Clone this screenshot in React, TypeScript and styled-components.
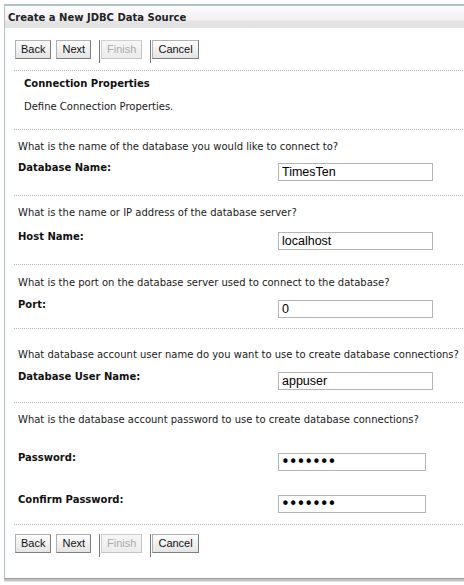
import React from "react";
import styled, { createGlobalStyle } from "styled-components";

const GlobalStyle = createGlobalStyle`
  html, body { margin: 0; padding: 0; background: #ffffff; }
  body {
    font-family: "DejaVu Sans", Verdana, sans-serif;
    font-size: 10px;
    color: #1a1a1a;
    overflow: hidden;
  }
`;

const Page = styled.div`
  width: 464px;
  height: 585px;
  padding: 4px 0 0 4px;
  box-sizing: border-box;
  overflow: hidden;
`;

const Frame = styled.div`
  width: 480px;
  border-top: 2px solid #b3c0c8;
  border-left: 1px solid #b3c0c8;
  border-bottom: 1px solid #9c9c9c;
  box-shadow: 0 2px 0 #c4c4c4, 0 3px 0 #e2e2e2;
`;

const TitleBar = styled.div`
  height: 22px;
  box-sizing: border-box;
  padding-left: 3px;
  display: flex;
  align-items: center;
  background: linear-gradient(
    to bottom,
    #fdfdfd 0px,
    #f8f5f8 7px,
    #f3eff3 14px,
    #e4e4e4 15px,
    #e2e2e2 22px
  );
  font-weight: bold;
  font-size: 10px;
  color: #222;
`;

const Content = styled.div`
  margin-left: 9px;
`;

const ButtonBar = styled.div<{ $pt: number; $pb: number; $dotted?: boolean }>`
  display: flex;
  align-items: flex-start;
  padding: ${(p) => p.$pt}px 0 ${(p) => p.$pb}px 1px;
  border-top: ${(p) => (p.$dotted ? "1px dotted #b4b4b4" : "none")};
`;

const Button = styled.button<{ $gap?: number }>`
  height: 19px;
  margin: 0 0 0 ${(p) => p.$gap ?? 0}px;
  padding: 0 5px;
  box-sizing: border-box;
  font-family: "Liberation Sans", Arial, sans-serif;
  font-size: 11px;
  color: ${(p) => (p.disabled ? "#ababab" : "#111")};
  background: ${(p) =>
    p.disabled
      ? "linear-gradient(to bottom, #f6f6f6, #ececec)"
      : "linear-gradient(to bottom, #fdfdfd, #e4e4e4)"};
  border: 1px solid ${(p) => (p.disabled ? "#cfcfcf" : "#b2b2b2")};
  border-right-color: ${(p) => (p.disabled ? "#c4c4c4" : "#7d7d7d")};
  border-bottom-color: ${(p) => (p.disabled ? "#c4c4c4" : "#7d7d7d")};
  border-radius: 0;
  line-height: 17px;
  cursor: default;
`;

const Separator = styled.span`
  display: block;
  width: 1px;
  height: 23px;
  margin-left: 8px;
  background: #7a7a7a;
`;

const Intro = styled.div`
  border-top: 1px dotted #b4b4b4;
  padding: 6px 0 15px 10px;
`;

const Heading = styled.div`
  font-weight: bold;
  line-height: 14px;
  color: #111;
`;

const IntroText = styled.div`
  margin-top: 9px;
  line-height: 14px;
`;

const Section = styled.div<{ $pt: number; $pb: number }>`
  border-top: 1px dotted #b4b4b4;
  padding: ${(p) => p.$pt}px 0 ${(p) => p.$pb}px 4px;
`;

const Question = styled.div`
  line-height: 14px;
  white-space: nowrap;
`;

const FieldRow = styled.div<{ $mt: number }>`
  display: grid;
  grid-template-columns: 260px auto;
  align-items: start;
  margin-top: ${(p) => p.$mt}px;
`;

const Label = styled.label`
  font-weight: bold;
  line-height: 14px;
  color: #111;
`;

const TextInput = styled.input<{ $narrow?: boolean }>`
  display: block;
  margin-top: 2px;
  width: ${(p) => (p.$narrow ? 148 : 155)}px;
  height: 18px;
  box-sizing: border-box;
  padding: 0 ${(p) => (p.type === "password" ? 2 : 3)}px;
  border: 1px solid #b4b4b4;
  border-radius: 0;
  outline: none;
  background: #fff;
  color: #000;
  font-family: ${(p) =>
    p.type === "password"
      ? '"DejaVu Sans", sans-serif'
      : '"Liberation Sans", Arial, sans-serif'};
  font-size: ${(p) => (p.type === "password" ? 15 : 12.5)}px;
  letter-spacing: ${(p) => (p.type === "password" ? "-1.1px" : "normal")};
`;

const Buttons: React.FC = () => (
  <>
    <Button type="button">Back</Button>
    <Button type="button" $gap={5}>
      Next
    </Button>
    <Separator />
    <Button type="button" $gap={1} disabled>
      Finish
    </Button>
    <Separator />
    <Button type="button" $gap={1}>
      Cancel
    </Button>
  </>
);

type Field = { label: string; value: string; password?: boolean; mt: number };
type Sec = { question: string; pt: number; pb: number; fields: Field[] };

const sections: Sec[] = [
  {
    question: "What is the name of the database you would like to connect to?",
    pt: 10,
    pb: 14,
    fields: [{ label: "Database Name:", value: "TimesTen", mt: 7 }],
  },
  {
    question: "What is the name or IP address of the database server?",
    pt: 10,
    pb: 14,
    fields: [{ label: "Host Name:", value: "localhost", mt: 10 }],
  },
  {
    question: "What is the port on the database server used to connect to the database?",
    pt: 11,
    pb: 10,
    fields: [{ label: "Port:", value: "0", mt: 8 }],
  },
  {
    question:
      "What database account user name do you want to use to create database connections?",
    pt: 19,
    pb: 12,
    fields: [{ label: "Database User Name:", value: "appuser", mt: 8 }],
  },
  {
    question:
      "What is the database account password to use to create database connections?",
    pt: 10,
    pb: 11,
    fields: [
      { label: "Password:", value: "1234567", password: true, mt: 24 },
      { label: "Confirm Password:", value: "1234567", password: true, mt: 22 },
    ],
  },
];

export default function App() {
  return (
    <Page>
      <GlobalStyle />
      <Frame>
        <TitleBar>Create a New JDBC Data Source</TitleBar>
        <Content>
          <ButtonBar $pt={12} $pb={7}>
            <Buttons />
          </ButtonBar>
          <Intro>
            <Heading>Connection Properties</Heading>
            <IntroText>Define Connection Properties.</IntroText>
          </Intro>
          {sections.map((s) => (
            <Section key={s.question} $pt={s.pt} $pb={s.pb}>
              <Question>{s.question}</Question>
              {s.fields.map((f) => (
                <FieldRow key={f.label} $mt={f.mt}>
                  <Label>{f.label}</Label>
                  <TextInput
                    type={f.password ? "password" : "text"}
                    defaultValue={f.value}
                    readOnly
                    $narrow={f.password}
                  />
                </FieldRow>
              ))}
            </Section>
          ))}
          <ButtonBar $pt={9} $pb={21} $dotted>
            <Buttons />
          </ButtonBar>
        </Content>
      </Frame>
    </Page>
  );
}
